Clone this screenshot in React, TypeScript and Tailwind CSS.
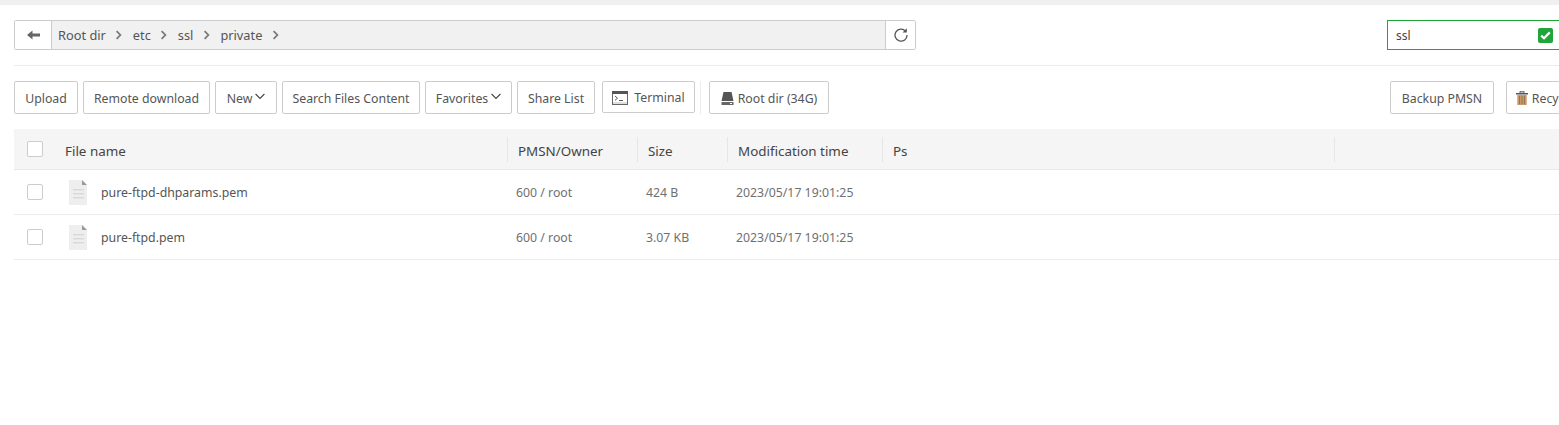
import React from "react";

const font = { fontFamily: '"Noto Sans", "Noto Sans CJK SC", sans-serif' };

function Chevron() {
  return (
    <svg width="8" height="10" viewBox="0 0 8 10" className="mx-[9.5px] mb-[1px] shrink-0">
      <path d="M1.6 1.2 L5.4 5 L1.6 8.8" fill="none" stroke="#777" strokeWidth="1.7" />
    </svg>
  );
}

function Down() {
  return (
    <svg width="10" height="7" viewBox="0 0 10 7" className="ml-[3px] mb-[6px]">
      <path d="M0.6 1 L5 5.4 L9.4 1" fill="none" stroke="#444" strokeWidth="1.1" />
    </svg>
  );
}

function Btn({ children, cls }: { children: React.ReactNode; cls: string }) {
  return (
    <div className={`${cls} shrink-0 flex items-center justify-center rounded-[2px] border border-[#ccc] bg-white pt-[3px] text-[12.3px] leading-none text-[#555] whitespace-nowrap`}>
      {children}
    </div>
  );
}

function FileIcon() {
  return (
    <svg width="18" height="25" viewBox="0 0 18 25">
      <path d="M0 0H13L18 5V25H0Z" fill="#eeeeee" />
      <path d="M13 0L18 5H13Z" fill="#999" />
      <rect x="4" y="9" width="11" height="1.4" fill="#d8d8d8" />
      <rect x="4" y="13" width="11" height="1.4" fill="#d8d8d8" />
      <rect x="4" y="17" width="11" height="1.4" fill="#d8d8d8" />
    </svg>
  );
}

function Row({ name, size }: { name: string; size: string }) {
  return (
    <div className="h-[45px] flex items-center border-b border-[#ececec] text-[12.3px] text-[#707070]">
      <div className="w-[27px] pl-[13px] box-content shrink-0">
        <div className="w-[16px] h-[16px] rounded-[2px] border border-[#ccc] bg-white" />
      </div>
      <div className="w-[15px] shrink-0" />
      <FileIcon />
      <div className="w-[429px] pl-[14px] pt-[3px] shrink-0 text-[#555]">{name}</div>
      <div className="w-[130px] pt-[3px] shrink-0">600 / root</div>
      <div className="w-[90px] pt-[3px] shrink-0">{size}</div>
      <div className="pt-[3px] shrink-0">2023/05/17 19:01:25</div>
    </div>
  );
}

function Head({ w, children }: { w: string; children?: React.ReactNode }) {
  return (
    <div className={`${w} shrink-0 h-[25px] flex items-center pl-[10px] border-l border-[#e6e6e6]`}>
      <span className="pt-[5px]">{children}</span>
    </div>
  );
}

export default function App() {
  return (
    <div className="w-[1559px] h-[425px] overflow-hidden bg-white" style={font}>
      <div className="h-[5px] bg-[#f0f0f0]" />
      <div className="w-[1800px] pl-[14px]">
        <div className="mt-[15px] flex items-center h-[30px] text-[12.8px] text-[#555]">
          <div className="w-[902px] h-[30px] shrink-0 flex rounded-[2px] border border-[#ccc] bg-[#f1f1f1]">
            <div className="w-[37px] shrink-0 bg-white border-r border-[#ccc] flex items-center justify-center">
              <svg width="13" height="10" viewBox="0 0 13 10">
                <path d="M0 5L5.5 0.5V3.4H13V6.6H5.5V9.5Z" fill="#666" />
              </svg>
            </div>
            <div className="flex-1 flex items-center pl-[6px] pt-[1px]">
              <span>Root dir</span><Chevron />
              <span>etc</span><Chevron />
              <span>ssl</span><Chevron />
              <span>private</span><Chevron />
            </div>
            <div className="w-[30px] shrink-0 bg-white border-l border-[#ccc] flex items-center justify-center">
              <svg width="14" height="14" viewBox="0 0 14 14">
                <path d="M11.6 3.3A6 6 0 1 0 13 7" fill="none" stroke="#555" strokeWidth="1.3" />
                <path d="M12.8 0.2V4.4H8.6Z" fill="#555" />
              </svg>
            </div>
          </div>
          <div className="ml-[471px] w-[200px] h-[30px] shrink-0 flex items-center border border-[#20a53a] pl-[8px] text-[12px] text-[#444]">
            <span className="w-[142px] pt-[1px]">ssl</span>
            <div className="w-[15px] h-[15px] rounded-[2px] bg-[#20a53a] flex items-center justify-center">
              <svg width="11" height="9" viewBox="0 0 11 9">
                <path d="M1.2 4.6L4 7.2L9.8 1.4" fill="none" stroke="#fff" strokeWidth="2.2" />
              </svg>
            </div>
          </div>
        </div>

        <div className="mt-[15px] w-[1545px] border-t border-[#ececec]" />

        <div className="mt-[15px] flex items-start">
          <Btn cls="w-[64px] h-[33px]">Upload</Btn>
          <Btn cls="w-[127px] h-[33px] ml-[5px]">Remote download</Btn>
          <Btn cls="w-[62px] h-[33px] ml-[5px]">New<Down /></Btn>
          <Btn cls="w-[138px] h-[33px] ml-[5px]">Search Files Content</Btn>
          <Btn cls="w-[87px] h-[33px] ml-[5px]">Favorites<Down /></Btn>
          <Btn cls="w-[78px] h-[33px] ml-[5px]">Share List</Btn>
          <Btn cls="w-[93px] h-[32px] ml-[7px]">
            <svg width="16" height="14" viewBox="0 0 16 14" className="mr-[6px] mb-[2px]">
              <rect x="0.5" y="0.5" width="15" height="13" fill="#fff" stroke="#666" />
              <rect x="0" y="0" width="16" height="3" fill="#555" />
              <rect x="1" y="11" width="14" height="2" fill="#ddd" />
              <path d="M3 5L5.5 7.2L3 9.4" fill="none" stroke="#555" />
              <rect x="7" y="9" width="4" height="1" fill="#555" />
            </svg>
            Terminal
          </Btn>
          <div className="ml-[5px] mr-[8px] w-px h-[33px] bg-[#ececec]" />
          <Btn cls="w-[120px] h-[33px]">
            <svg width="13" height="13" viewBox="0 0 13 13" className="mr-[4px] mb-[2px]">
              <path d="M2.5 0H10.5L12.5 9H0.5Z" fill="#555" />
              <rect x="0.5" y="10" width="12" height="3" fill="#666" />
              <rect x="9" y="11" width="2" height="1" fill="#fff" />
            </svg>
            Root dir (34G)
          </Btn>
          <Btn cls="w-[104px] h-[33px] ml-[561px]">Backup PMSN</Btn>
          <Btn cls="w-[100px] h-[33px] ml-[12px]">
            <svg width="12" height="14" viewBox="0 0 12 14" className="mr-[4px] mb-[3px]">
              <rect x="0" y="2" width="12" height="1.5" fill="#555" />
              <rect x="4" y="0.3" width="4" height="1.7" fill="none" stroke="#555" strokeWidth="0.8" />
              <rect x="1.3" y="4" width="9.4" height="10" fill="#c79a6b" />
              <path d="M3.5 5V13M6 5V13M8.5 5V13" stroke="#8a6a48" strokeWidth="0.8" />
            </svg>
            Recycle bin
          </Btn>
        </div>

        <div className="mt-[15px] w-[1545px]">
          <div className="h-[41px] flex items-center bg-[#f5f5f5] border-b border-[#e8e8e8] text-[13.4px] text-[#444]">
            <div className="w-[27px] pl-[13px] box-content shrink-0">
              <div className="w-[16px] h-[16px] rounded-[2px] border border-[#ccc] bg-white" />
            </div>
            <div className="w-[453px] pl-[11px] pt-[5px] shrink-0">File name</div>
            <Head w="w-[130px]">PMSN/Owner</Head>
            <Head w="w-[90px]">Size</Head>
            <Head w="w-[155px]">Modification time</Head>
            <Head w="w-[452px]">Ps</Head>
            <Head w="w-[200px]" />
          </div>
          <Row name="pure-ftpd-dhparams.pem" size="424 B" />
          <Row name="pure-ftpd.pem" size="3.07 KB" />
        </div>
      </div>
    </div>
  );
}
